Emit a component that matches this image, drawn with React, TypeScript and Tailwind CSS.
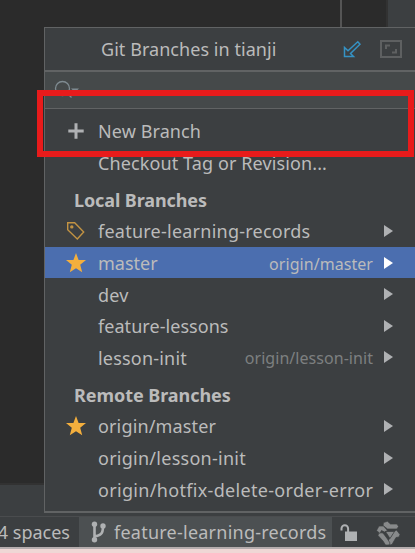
import React from "react";

const Star = () => (
  <svg width="20" height="20" viewBox="0 0 20 20" fill="#f4af3d">
    <path d="M10 0l2.6 7.1H20l-5.8 4.6 2 7.6-6.2-4.1-6.2 4.1 2-7.6L0 7.1h7.4z" />
  </svg>
);

const Tag = () => (
  <svg width="20" height="20" viewBox="0 0 20 20" fill="none" stroke="#c29343" strokeWidth="1.4">
    <path d="M1.7 1.8h7l9 9.2-6.4 7L1.7 8.8z" />
    <circle cx="5.8" cy="5.9" r="1" fill="#c29343" />
  </svg>
);

const Plus = () => (
  <svg width="16" height="16" viewBox="0 0 16 16" fill="#afb1b3">
    <path d="M6.5 0.3h3v6.2h6.2v3H9.500v6.200h-3V9.500H.3v-3h6.200z" />
  </svg>
);

type RowProps = {
  icon?: React.ReactNode;
  label: string;
  spacing?: string;
  remote?: string;
  selected?: boolean;
  arrow?: boolean;
};

function Row({ icon, label, spacing = "", remote, selected, arrow = true }: RowProps) {
  return (
    <div className={`flex h-[31.6px] shrink-0 items-center pr-[22px] ${selected ? "bg-[#4b6eaf]" : ""}`}>
      <div className="flex w-[53px] shrink-0 items-center justify-center pl-[9px]">{icon}</div>
      <span className={`pt-px whitespace-nowrap ${spacing}`}>{label}</span>
      {remote && (
        <span className={`mr-[11px] ml-auto pt-[2px] text-[16px] tracking-[0.05px] whitespace-nowrap ${selected ? "text-[#bbbbbb]" : "text-[#7d7f80]"}`}>
          {remote}
        </span>
      )}
      {arrow && (
        <svg className={`shrink-0 ${remote ? "" : "ml-auto"}`} width="9" height="12" viewBox="0 0 9 12">
          <path d="M0 0l9 6-9 6z" fill={selected ? "#fff" : "#afb1b3"} />
        </svg>
      )}
    </div>
  );
}

export default function App() {
  return (
    <div className="relative flex h-[553px] w-[415px] flex-col overflow-hidden bg-[#2b2b2b] font-['Noto_Sans','Open_Sans',sans-serif] text-[18px] leading-6 text-[#bbbbbb]">
      <div className="flex h-[483px] shrink-0">
        <div className="w-[340px]" />
        <div className="w-[2px] bg-[#555555]" />
        <div className="w-[44px]" />
        <div className="w-[2px] bg-[#323232]" />
        <div className="flex-1 bg-[#3c3f41]" />
      </div>
      <div className="h-[34px] shrink-0 border-t-2 border-b border-t-[#323232] border-b-[#4a4c4e] bg-[#3c3f41]" />
      <div className="flex h-[30px] shrink-0 bg-[#3c3f41]">
        <div className="flex w-[79px] items-center justify-end pr-[9px] whitespace-nowrap">4 spaces</div>
        <div className="flex w-[253px] items-center bg-[#4c5052] pl-[12px] whitespace-nowrap">
          <svg width="16" height="22" viewBox="0 0 16 22" fill="none" stroke="#afb1b3" strokeWidth="2.600">
            <path d="M3.500 3v16M3.500 15.500c6-1 8.500-2.500 8.500-10" />
            <g fill="#afb1b3" stroke="none">
              <circle cx="3.500" cy="3.200" r="2.700" />
              <circle cx="3.500" cy="18.800" r="2.700" />
              <circle cx="12" cy="5" r="2.700" />
            </g>
          </svg>
          <span className="ml-[7px] tracking-[0.24px]">feature-learning-records</span>
        </div>
        <svg className="mt-[7px] ml-[8px] shrink-0" width="18" height="18" viewBox="0 0 18 18">
          <path d="M1.500 6.500V4.500a3.300 3.300 0 0 1 6.600 0v3.500" fill="none" stroke="#afb1b3" strokeWidth="2" />
          <path d="M5 7.500h12V17H5z" fill="#afb1b3" />
        </svg>
        <svg className="mt-[4px] ml-[18px] shrink-0" width="25" height="25" viewBox="0 0 25 25" fill="#888a8b" stroke="#3c3f41" strokeWidth="0.700">
          <path d="M7.500 1.500l4-1.200 3 2.700h6.500l1.500 2.500-1.500 2.500h-9.500L7 4.500z" />
          <path d="M20.500 9l3.500 4.500-1 2.500-3 .5-4 7-2.500.5-2-3.500 4.500-6.500 1.500-3z" />
          <path d="M13 24h-3.500l-2.500-4-5-5.500 1-3 4 .5 4.500 6 2.500 4z" />
          <path d="M.5 9.500L3 5h4.500l4 4.500-3 1.500-3-1.500-1.500 3zM9.500 10.500h9l-4.500 7z" />
        </svg>
      </div>
      <div className="h-[2px] shrink-0 bg-[#b5adae]" />
      <div className="h-[4px] shrink-0 bg-[#efd7d5]" />

      <div className="absolute top-[27px] left-[44px] flex h-[486px] w-[371px] flex-col border-t border-b-2 border-l border-[#616364] bg-[#3c3f41]">
        <div className="flex h-[42px] shrink-0 items-center pl-[56px] text-[#bbbbbb]">
          <span className="tracking-[0.05px] whitespace-nowrap">Git Branches in tianji</span>
          <svg className="mr-[19px] ml-auto" width="18" height="18" viewBox="0 0 18 18" fill="none" stroke="#3592c4" strokeWidth="1.500">
            <path d="M1.500 7.500v9h9l-3-3L17 4.200 14.800 1.800 5 10.800z" />
          </svg>
          <svg className="mr-[13px]" width="22" height="18" viewBox="0 0 22 18" fill="none" stroke="#5e6061" strokeWidth="2">
            <path d="M1 1h20v16H1zM6 9V5.500h4M16 9v3.500h-4" />
          </svg>
        </div>
        <div className="h-[2px] shrink-0 bg-[#616364]" />
        <div className="h-[37px] shrink-0 border-b border-[#616364] bg-[#45494a] pt-[8px] pl-[9px]">
          <svg width="26" height="20" viewBox="0 0 26 20" fill="none" stroke="#7f8b91" strokeWidth="1.300">
            <circle cx="8.500" cy="8.500" r="7" />
            <path d="M13.500 13.500l4 4" />
            <path d="M17 8.500h8l-4 4z" fill="#7f8b91" stroke="none" />
          </svg>
        </div>
        <div className="flex flex-col pt-[6px]">
          <Row icon={<Plus />} label="New Branch" spacing="tracking-[0.1px]" arrow={false} />
          <Row label="Checkout Tag or Revision..." spacing="tracking-[0.11px]" arrow={false} />
          <div className="mt-[6px] flex h-[31px] items-center pl-[29px] font-bold tracking-[-0.1px]">Local Branches</div>
          <Row icon={<Tag />} label="feature-learning-records" spacing="tracking-[0.24px]" />
          <Row icon={<Star />} label="master" remote="origin/master" selected />
          <Row label="dev" spacing="tracking-[0.2px]" />
          <Row label="feature-lessons" spacing="tracking-[0.05px]" />
          <Row label="lesson-init" spacing="tracking-[0.2px]" remote="origin/lesson-init" />
          <div className="mt-[6px] flex h-[31px] items-center pl-[29px] font-bold tracking-[-0.05px]">Remote Branches</div>
          <Row icon={<Star />} label="origin/master" spacing="tracking-[0.15px]" />
          <Row label="origin/lesson-init" spacing="tracking-[0.26px]" />
          <Row label="origin/hotfix-delete-order-error" spacing="tracking-[0.32px]" />
        </div>
      </div>

      <div className="absolute top-[90px] left-[37px] h-[67px] w-[377px] border-[6px] border-[#e81b1b]" />
    </div>
  );
}
